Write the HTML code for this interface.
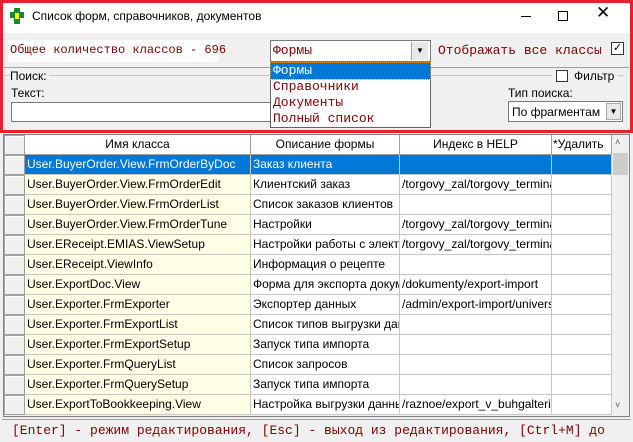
<!DOCTYPE html><html><head><meta charset="utf-8"><style>
*{box-sizing:border-box;margin:0;padding:0}
body{width:633px;height:442px;background:#f0f0f0;font-family:"Liberation Sans",sans-serif;font-size:12px;position:relative;overflow:hidden;color:#000}
.a{position:absolute}
.mono{font-family:"Liberation Mono",monospace;color:#800000;font-size:13px}
.row{position:absolute;left:4px;height:20px;width:608px}
.row div{position:absolute;top:0;height:20px;line-height:19px;border-right:1px solid #c8c8c8;border-bottom:1px solid #c8c8c8;white-space:nowrap;overflow:hidden;padding-left:2px}
.ind{left:0;width:21px;background:#f0f0f0;border:1px solid #a0a0a0!important;box-shadow:inset 1px 1px #fff}
.c1{left:21px;width:226px;background:#ffffe6}
.c2{left:247px;width:149px;background:#fff}
.c3{left:396px;width:152px;background:#fff}
.c4{left:548px;width:60px;background:#fff}
.sel .c1,.sel .c2,.sel .c3,.sel .c4{background:#0078d7;color:#fff}
.hdr div{background:#fff;text-align:center;padding:0;border-color:#a0a0a0}
</style></head><body>
<div class="a" style="left:0;top:0;width:633px;height:33px;background:#fff"></div>
<div class="a" style="left:10px;top:8px;width:14px;height:16px;">
<div class="a" style="left:4px;top:0;width:6px;height:16px;background:#1a8a2a"></div>
<div class="a" style="left:0;top:4px;width:14px;height:6px;background:#1a8a2a"></div>
<div class="a" style="left:5px;top:5px;width:4px;height:6px;background:#ff0"></div></div>
<div class="a" style="left:32px;top:9px;font-size:12px">Список форм, справочников, документов</div>
<div class="a" style="left:521px;top:16px;width:10px;height:1px;background:#000"></div>
<div class="a" style="left:558px;top:11px;width:10px;height:10px;border:1px solid #000"></div>
<div class="a" style="left:596px;top:3px;font-size:17px;font-weight:lighter">✕</div>
<div class="a" style="left:8px;top:40px;width:210px;height:22px;background:#fff"></div>
<div class="a mono" style="left:10px;top:43px;font-size:12px">Общее количество классов - 696</div>
<div class="a" style="left:270px;top:40px;width:161px;height:22px;background:#fff;border:1px solid #7a7a7a"></div>
<div class="a mono" style="left:273px;top:43px">Формы</div>
<div class="a" style="left:411px;top:42px;width:17px;height:18px;background:#e8e8e8;border-left:1px solid #aaa;font-size:8px;text-align:center;line-height:18px">▼</div>
<div class="a mono" style="left:438px;top:43px">Отображать все классы</div>
<div class="a" style="left:611px;top:42px;width:13px;height:13px;border:1px solid #333;background:#fff;font-size:11px;line-height:11px;text-align:center">✓</div>
<div class="a" style="left:4px;top:67px;width:625px;height:1px;background:#a0a0a0"></div>
<div class="a" style="left:4px;top:75px;width:620px;height:1px;background:#c8c8c8"></div>
<div class="a" style="left:10px;top:69px;background:#f0f0f0;padding-right:2px">Поиск:</div>
<div class="a" style="left:552px;top:69px;background:#f0f0f0;padding:0 4px"><span style="display:inline-block;width:12px;height:12px;border:1px solid #333;background:#fff;vertical-align:-2px;margin-right:6px"></span>Фильтр</div>
<div class="a" style="left:11px;top:86px">Текст:</div>
<div class="a" style="left:11px;top:102px;width:402px;height:20px;background:#fff;border:1px solid #7a7a7a"></div>
<div class="a" style="left:508px;top:86px">Тип поиска:</div>
<div class="a" style="left:508px;top:101px;width:115px;height:21px;background:#fff;border:1px solid #7a7a7a;padding:3px 0 0 3px;white-space:nowrap;overflow:hidden">По фрагментам</div>
<div class="a" style="left:606px;top:103px;width:15px;height:17px;background:#e8e8e8;border:1px solid #aaa;font-size:8px;text-align:center;line-height:16px">▼</div>
<div class="a" style="left:270px;top:62px;width:161px;height:66px;background:#fff;border:1px solid #646464"></div>
<div class="a mono" style="left:271px;top:63px;width:159px;height:16px;background:#0078d7;color:#fff;padding-left:2px;line-height:16px;outline:1px dotted #f90">Формы</div>
<div class="a mono" style="left:273px;top:79px">Справочники</div>
<div class="a mono" style="left:273px;top:95px">Документы</div>
<div class="a mono" style="left:273px;top:111px">Полный список</div>
<div class="a" style="left:0;top:0;width:633px;height:133px;border:3px solid #e8202a"></div>
<div class="a" style="left:3px;top:134px;width:627px;height:283px;background:#f0f0f0;border:1px solid #828282"></div>
<div class="row hdr" style="top:135px"><div class="ind" style="background:#f0f0f0"></div><div class="c1">Имя класса</div><div class="c2">Описание формы</div><div class="c3">Индекс в HELP</div><div class="c4" style="text-align:left;padding-left:1px">*Удалить</div></div>
<div class="row sel" style="top:155px"><div class="ind"></div><div class="c1">User.BuyerOrder.View.FrmOrderByDoc</div><div class="c2">Заказ клиента</div><div class="c3"></div><div class="c4"></div></div>
<div class="row" style="top:175px"><div class="ind"></div><div class="c1">User.BuyerOrder.View.FrmOrderEdit</div><div class="c2">Клиентский заказ</div><div class="c3">/torgovy_zal/torgovy_terminal</div><div class="c4"></div></div>
<div class="row" style="top:195px"><div class="ind"></div><div class="c1">User.BuyerOrder.View.FrmOrderList</div><div class="c2">Список заказов клиентов</div><div class="c3"></div><div class="c4"></div></div>
<div class="row" style="top:215px"><div class="ind"></div><div class="c1">User.BuyerOrder.View.FrmOrderTune</div><div class="c2">Настройки</div><div class="c3">/torgovy_zal/torgovy_terminal</div><div class="c4"></div></div>
<div class="row" style="top:235px"><div class="ind"></div><div class="c1">User.EReceipt.EMIAS.ViewSetup</div><div class="c2">Настройки работы с электронными</div><div class="c3">/torgovy_zal/torgovy_terminal</div><div class="c4"></div></div>
<div class="row" style="top:255px"><div class="ind"></div><div class="c1">User.EReceipt.ViewInfo</div><div class="c2">Информация о рецепте</div><div class="c3"></div><div class="c4"></div></div>
<div class="row" style="top:275px"><div class="ind"></div><div class="c1">User.ExportDoc.View</div><div class="c2">Форма для экспорта документов</div><div class="c3">/dokumenty/export-import</div><div class="c4"></div></div>
<div class="row" style="top:295px"><div class="ind"></div><div class="c1">User.Exporter.FrmExporter</div><div class="c2">Экспортер данных</div><div class="c3">/admin/export-import/universal</div><div class="c4"></div></div>
<div class="row" style="top:315px"><div class="ind"></div><div class="c1">User.Exporter.FrmExportList</div><div class="c2">Список типов выгрузки данных</div><div class="c3"></div><div class="c4"></div></div>
<div class="row" style="top:335px"><div class="ind"></div><div class="c1">User.Exporter.FrmExportSetup</div><div class="c2">Запуск типа импорта</div><div class="c3"></div><div class="c4"></div></div>
<div class="row" style="top:355px"><div class="ind"></div><div class="c1">User.Exporter.FrmQueryList</div><div class="c2">Список запросов</div><div class="c3"></div><div class="c4"></div></div>
<div class="row" style="top:375px"><div class="ind"></div><div class="c1">User.Exporter.FrmQuerySetup</div><div class="c2">Запуск типа импорта</div><div class="c3"></div><div class="c4"></div></div>
<div class="row" style="top:395px"><div class="ind"></div><div class="c1">User.ExportToBookkeeping.View</div><div class="c2">Настройка выгрузки данных</div><div class="c3">/raznoe/export_v_buhgalteriyu</div><div class="c4"></div></div>
<div class="a" style="left:612px;top:135px;width:17px;height:281px;background:#f0f0f0"></div>
<div class="a" style="left:615px;top:137px;font-size:9px;color:#555">˄</div>
<div class="a" style="left:613px;top:153px;width:15px;height:22px;background:#cdcdcd"></div>
<div class="a" style="left:615px;top:400px;font-size:9px;color:#555">˅</div>
<div class="a" style="left:2px;top:419px;width:629px;height:1px;background:#a0a0a0"></div>
<div class="a mono" style="left:12px;top:423px;white-space:nowrap;width:606px;overflow:hidden">[Enter] - режим редактирования, [Esc] - выход из редактирования, [Ctrl+M] до</div>
</body></html>
